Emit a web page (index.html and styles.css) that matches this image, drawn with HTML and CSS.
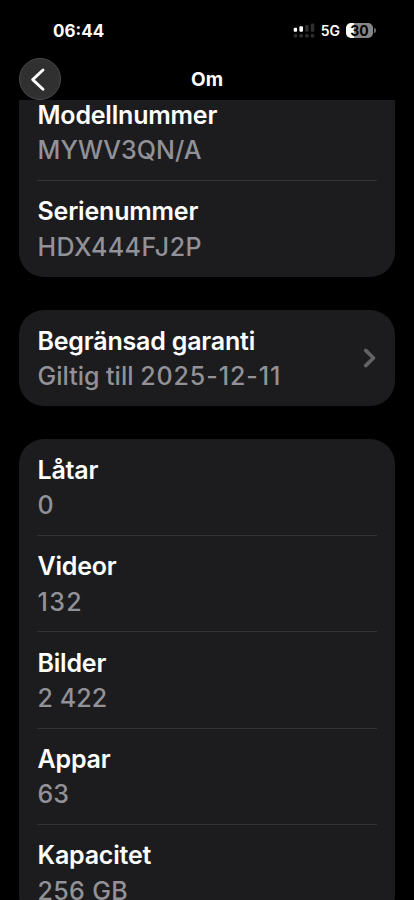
FILE: index.html
```html
<!DOCTYPE html>
<html lang="sv">
<head>
<meta charset="utf-8">
<meta name="viewport" content="width=device-width, initial-scale=1">
<title>Om</title>
<link rel="stylesheet" href="styles.css">
</head>
<body>
<div class="screen">
  <header class="header">
    <div class="status">
      <span class="clock">06:44</span>
      <div class="indicators">
        <svg class="signal" width="22" height="16" viewBox="0 0 22 16" aria-hidden="true">
          <g fill="#fff"><rect x="0.7" y="4.7" width="3.4" height="4" rx="1"/><rect x="6.4" y="3.2" width="3.6" height="5.5" rx="1"/></g>
          <g fill="#2e2e30"><rect x="12.1" y="2" width="3.5" height="6.7" rx="1"/><rect x="17.8" y="0.5" width="3.5" height="8.2" rx="1"/><rect x="0.7" y="11" width="3.4" height="3.4" rx="1.2"/><rect x="6.4" y="11" width="3.6" height="3.4" rx="1.2"/><rect x="12.1" y="11" width="3.5" height="3.4" rx="1.2"/><rect x="17.8" y="11" width="3.5" height="3.4" rx="1.2"/></g>
        </svg>
        <span class="network">5G</span>
        <span class="battery">30</span>
        <span class="battery-tip"></span>
      </div>
    </div>
    <nav class="nav">
      <button class="back" aria-label="Tillbaka">
        <svg width="39" height="39" viewBox="0 0 39 39" fill="none" stroke="#fff" stroke-width="2.9" stroke-linecap="round" stroke-linejoin="round"><path d="M23 10 12.7 19.6 23 29.2"/></svg>
      </button>
      <h1 class="title">Om</h1>
    </nav>
  </header>
  <main class="content">
    <section class="card card-clipped">
      <div class="row"><div class="label">Modellnummer</div><div class="value">MYWV3QN/A</div></div>
      <div class="row"><div class="label">Serienummer</div><div class="value value-serial">HDX444FJ2P</div></div>
    </section>
    <section class="card">
      <div class="row row-link">
        <div><div class="label">Begränsad garanti</div><div class="value value-warranty">Giltig till <span class="date">2025-12-11</span></div></div>
        <svg class="chevron" width="14" height="22" viewBox="0 0 14 22" fill="none" stroke="#636367" stroke-width="3.6" stroke-linecap="round" stroke-linejoin="round"><path d="M2.7 3.4 10.5 11l-7.8 7.6"/></svg>
      </div>
    </section>
    <section class="card">
      <div class="row"><div class="label">Låtar</div><div class="value">0</div></div>
      <div class="row"><div class="label">Videor</div><div class="value value-count">132</div></div>
      <div class="row"><div class="label">Bilder</div><div class="value">2 422</div></div>
      <div class="row"><div class="label">Appar</div><div class="value">63</div></div>
      <div class="row"><div class="label">Kapacitet</div><div class="value value-size">256 GB</div></div>
    </section>
  </main>
</div>
</body>
</html>
```

FILE: styles.css
```css
* { box-sizing: border-box; }

body {
  margin: 0;
  background: #000;
  color: #fff;
  font-family: Inter, "Liberation Sans", sans-serif;
}

.screen {
  display: flex;
  flex-direction: column;
  height: 900px;
  overflow: hidden;
}

.header {
  flex: none;
  height: 100px;
}

.status {
  display: flex;
  justify-content: space-between;
  height: 58px;
  padding: 22px 38px 0 53px;
}

.clock {
  font-size: 17px;
  font-weight: 700;
  line-height: 18px;
}

.indicators {
  display: flex;
  align-items: center;
  height: 17px;
}

.network {
  margin-left: 6px;
  font-size: 14px;
  font-weight: 600;
}

.battery {
  width: 27px;
  height: 15px;
  margin-left: 6px;
  border-radius: 5px;
  background: linear-gradient(90deg, #fff 30%, #858585 30%);
  color: #000;
  font-size: 14px;
  font-weight: 700;
  line-height: 15px;
  text-align: center;
}

.battery-tip {
  width: 2px;
  height: 5px;
  margin-left: 1px;
  border-radius: 0 2px 2px 0;
  background: #6a6a6a;
}

.nav {
  display: grid;
  grid-template-columns: 42px 1fr 42px;
  align-items: center;
  height: 42px;
  padding: 0 19px;
}

.back {
  width: 42px;
  height: 42px;
  padding: 0;
  border: 1px solid #4a4a4b;
  border-radius: 50%;
  background: #303031;
}

.back svg { display: block; }

.title {
  margin: 0;
  padding-top: 2px;
  font-size: 19px;
  font-weight: 700;
  line-height: 24px;
  text-align: center;
}

.content {
  display: flex;
  flex: 1;
  flex-direction: column;
  gap: 33px;
  min-height: 0;
  padding: 0 19px;
  overflow: hidden;
}

.card {
  flex: none;
  padding: 0 18px;
  border-radius: 25px;
  background: #1c1c1e;
}

.card-clipped {
  margin-top: -16px;
  border-radius: 0 0 25px 25px;
}

.row {
  height: 96.3px;
  padding: 14px 0 11px;
}

.row + .row {
  padding-top: 13.2px;
  border-top: 1px solid #333336;
}

.row-link {
  display: flex;
  align-items: center;
  justify-content: space-between;
}

.chevron { margin-top: -3px; }

.label,
.value {
  padding-left: 0.5px;
  font-size: 25px;
  line-height: 35.4px;
  white-space: nowrap;
}

.label {
  font-weight: 600;
  letter-spacing: -0.2px;
}

.value {
  color: #919197;
  font-weight: 500;
  letter-spacing: 0.1px;
}

.value-serial { letter-spacing: 0.42px; }

.value-warranty { letter-spacing: 0; }

.date { letter-spacing: 0.9px; }

.value-count { letter-spacing: 1.4px; }

.value-size { letter-spacing: 0.35px; }
```
